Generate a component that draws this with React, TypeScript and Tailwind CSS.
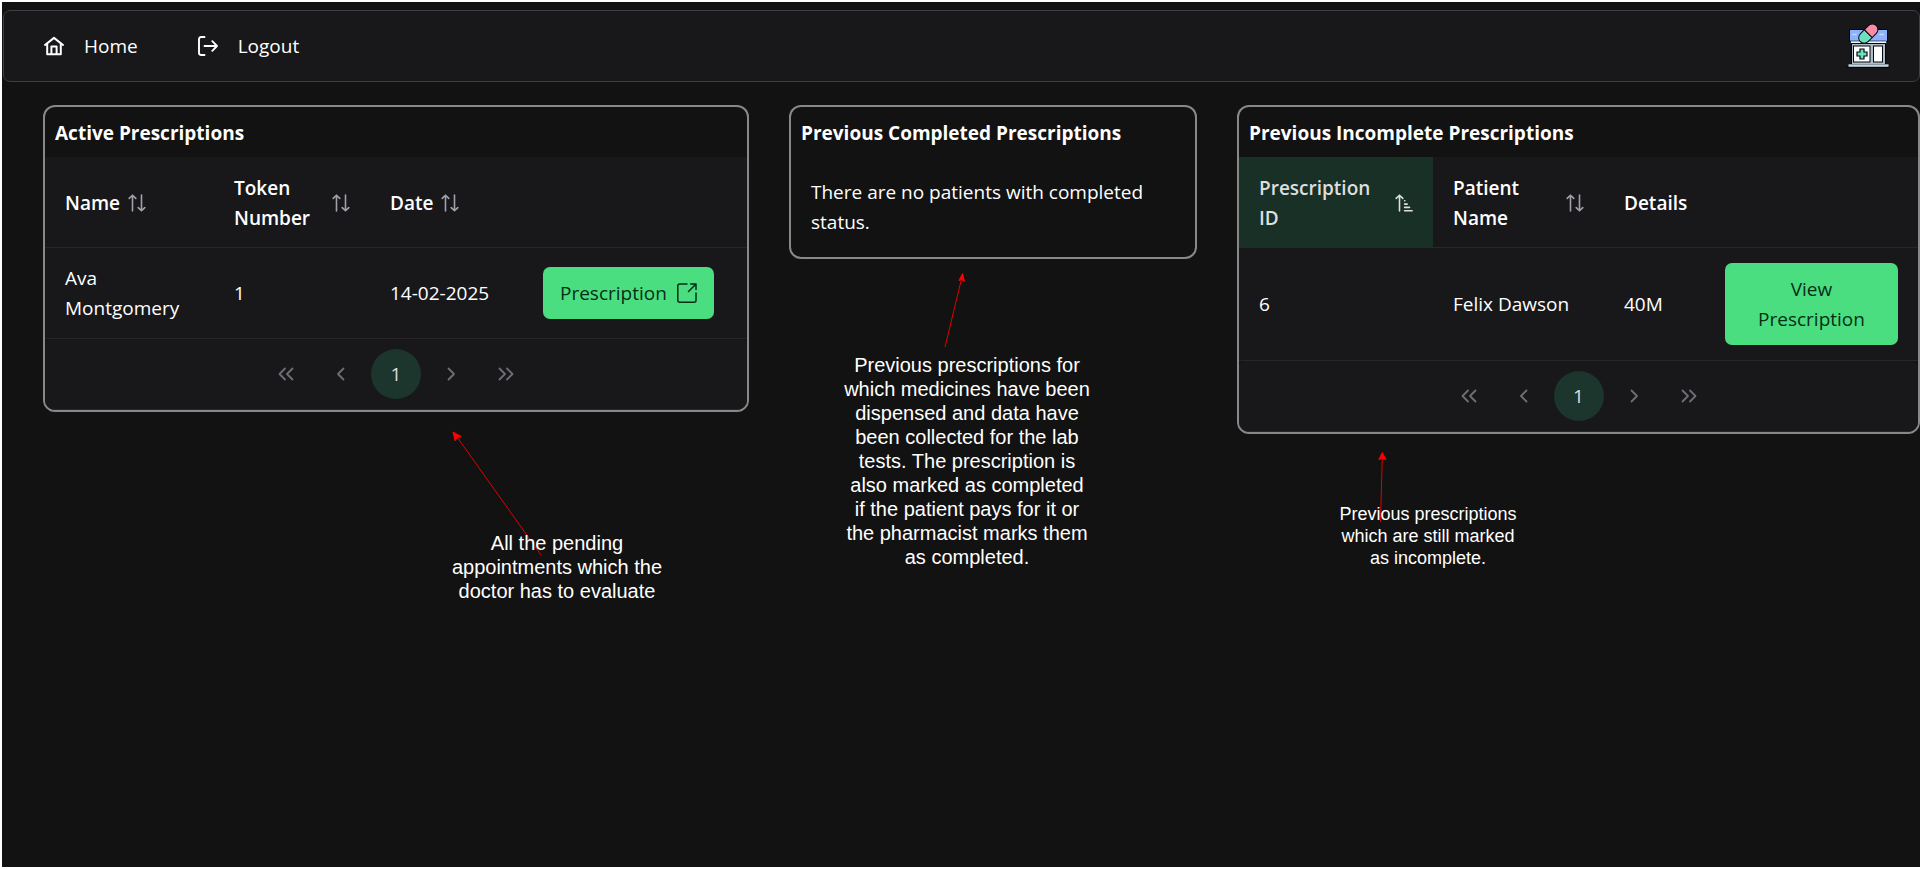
import type { ReactNode } from "react";

function HomeIcon() {
  return (
    <svg viewBox="0 0 20 20" className="size-5" fill="none" stroke="currentColor" strokeWidth="2" strokeLinecap="round" strokeLinejoin="round" aria-hidden="true">
      <path d="M1 9 10 1.9 19 9" />
      <path d="M3.2 7.8V18.2H16.8V7.8" />
      <path d="M7.4 18V10.6H12.6V18" />
    </svg>
  );
}

function LogoutIcon() {
  return (
    <svg viewBox="0 0 20 20" className="size-5" fill="none" stroke="currentColor" strokeWidth="1.9" strokeLinecap="round" strokeLinejoin="round" aria-hidden="true">
      <path d="M6.500 1H3.200Q1 1 1 3.200V16.800Q1 19 3.200 19H6.500" />
      <path d="M6.500 10H19M14.300 5.200 19 10l-4.700 4.800" />
    </svg>
  );
}

function SortIcon() {
  return (
    <svg viewBox="0 0 18 18" className="size-[18px] shrink-0 text-[#a1a1aa]" fill="none" stroke="currentColor" strokeWidth="1.6" strokeLinecap="round" strokeLinejoin="round" aria-hidden="true">
      <path d="M4.5 17V1.2M1.2 4.4 4.5 1.2l3.3 3.2" />
      <path d="M13.5 1V16.8M10.2 13.6l3.3 3.2 3.3-3.2" />
    </svg>
  );
}

function SortAmountIcon() {
  return (
    <svg viewBox="0 0 18 18" className="size-[18px] shrink-0" fill="none" stroke="currentColor" strokeWidth="1.6" strokeLinecap="round" strokeLinejoin="round" aria-hidden="true">
      <path d="M4.5 17V1.2M1.2 4.4 4.5 1.2l3.3 3.2" />
      <path d="M9.6 6.8h.3M9.6 10.1h2.6M9.6 13.4h4.9M9.6 16.7h7.6" />
    </svg>
  );
}

function ExternalIcon() {
  return (
    <svg viewBox="0 0 20 20" className="size-5" fill="none" stroke="currentColor" strokeWidth="1.5" strokeLinecap="round" strokeLinejoin="round" aria-hidden="true">
      <path d="M10 1H2.8Q.8 1 .8 3V17.2q0 2 2 2H17q2 0 2-2V10" />
      <path d="M11.5 8.5 19 1M13.6 1H19V6.4" />
    </svg>
  );
}

function PharmacyLogo() {
  return (
    <svg viewBox="0 0 44 44" className="size-11" role="img" aria-label="Pharmacy">
      <rect x="3.5" y="5.5" width="38" height="12" fill="#8db2fc" stroke="#05070c" />
      <path d="M6.500 10.500h4M33.500 10.500h4" stroke="#dbe7ff" strokeWidth="1.4" strokeDasharray="1.6 .8" />
      <rect x="4.5" y="17" width="36" height="2.5" fill="#f4f7fa" stroke="#05070c" strokeWidth=".6" />
      <rect x="5.5" y="19.5" width="34" height="21" fill="#aebcc8" stroke="#05070c" />
      <rect x="7.5" y="22" width="16.5" height="16" fill="#fff" stroke="#05070c" />
      <rect x="27.5" y="22" width="9" height="16" fill="#fff" stroke="#05070c" />
      <path d="M14 25h4v3h3v4h-3v3h-4v-3h-3v-4h3z" fill="#6be0bd" stroke="#05070c" strokeWidth="1.2" />
      <rect x="2.5" y="40.3" width="40" height="2.6" fill="#c4d6e2" />
      <path d="M0 43.4h44" stroke="#05070c" />
      <g transform="rotate(-45 22.300 9.600)">
        <path d="M22.300 4.100H16.500a5.500 5.500 0 0 0 0 11H22.300z" fill="#6be0bd" stroke="#05070c" />
        <path d="M22.300 4.100h5.800a5.500 5.500 0 0 1 0 11H22.300z" fill="#fb8ba5" stroke="#05070c" />
      </g>
    </svg>
  );
}

function PageArrow({ label, path }: { label: string; path: string }) {
  return (
    <button type="button" aria-label={label} className="flex size-[50px] items-center justify-center rounded-full text-[#6e6e74]">
      <svg viewBox="0 0 16 16" className="size-4" fill="none" stroke="currentColor" strokeWidth="1.8" strokeLinecap="round" strokeLinejoin="round" aria-hidden="true">
        <path d={path} />
      </svg>
    </button>
  );
}

function Paginator() {
  return (
    <nav aria-label="Pagination" className="flex justify-center gap-[5px] rounded-md border-b border-[#27272a] bg-[#18181b] py-[10px]">
      <PageArrow label="First page" path="M7 2.500 1.500 8 7 13.500M14.500 2.500 9 8l5.500 5.500" />
      <PageArrow label="Previous page" path="M10.500 2.500 5 8l5.500 5.500" />
      <button type="button" aria-current="page" className="size-[50px] rounded-full bg-[#1c352d] text-[#dedede]">
        1
      </button>
      <PageArrow label="Next page" path="M5.500 2.500 11 8l-5.500 5.500" />
      <PageArrow label="Last page" path="M1.500 2.500 7 8l-5.500 5.500M9 2.500 14.500 8 9 13.500" />
    </nav>
  );
}

function Card({ title, children, note }: { title: string; children: ReactNode; note: ReactNode }) {
  return (
    <div className="relative">
      <section className="overflow-hidden rounded-xl border-2 border-[#888888]">
        <h2 className="px-[10px] pt-[11px] pb-[9px] font-bold">{title}</h2>
        {children}
      </section>
      {note}
    </div>
  );
}

const th = "border-b border-[#27272a] px-5 pt-4 pb-[14px] text-left font-semibold";
const td = "border-b border-[#27272a] px-5 py-[15px]";
const tableStyle = "w-full table-fixed border-separate border-spacing-0 bg-[#18181b]";
const greenButton = "rounded-[7px] bg-[#4ade80] py-[11px] font-medium text-[#052e16]";

function ActiveTable() {
  return (
    <table className={tableStyle}>
      <colgroup>
        <col className="w-[169px]" />
        <col className="w-[156px]" />
        <col className="w-[153px]" />
        <col />
      </colgroup>
      <thead>
        <tr>
          <th className={th}>
            <div className="flex items-center gap-2">Name <SortIcon /></div>
          </th>
          <th className={th}>
            <div className="flex items-center justify-between gap-2">Token Number <SortIcon /></div>
          </th>
          <th className={th}>
            <div className="flex items-center gap-2">Date <SortIcon /></div>
          </th>
          <th className={th} aria-label="Actions" />
        </tr>
      </thead>
      <tbody>
        <tr>
          <td className={td}>Ava Montgomery</td>
          <td className={td}>1</td>
          <td className={td}>14-02-2025</td>
          <td className={td}>
            <button type="button" className={`${greenButton} flex items-center gap-[10px] px-[17px]`}>
              Prescription <ExternalIcon />
            </button>
          </td>
        </tr>
      </tbody>
    </table>
  );
}

function IncompleteTable() {
  return (
    <table className={tableStyle}>
      <colgroup>
        <col className="w-[194px]" />
        <col className="w-[171px]" />
        <col className="w-[101px]" />
        <col />
      </colgroup>
      <thead>
        <tr>
          <th className={`${th} bg-[#183026] text-[#dedede]`} aria-sort="ascending">
            <div className="flex items-center justify-between gap-2">Prescription ID <SortAmountIcon /></div>
          </th>
          <th className={th}>
            <div className="flex items-center justify-between gap-2">Patient Name <SortIcon /></div>
          </th>
          <th className={th}>Details</th>
          <th className={th} aria-label="Actions" />
        </tr>
      </thead>
      <tbody>
        <tr>
          <td className={td}>6</td>
          <td className={`${td} whitespace-nowrap`}>Felix Dawson</td>
          <td className={td}>40M</td>
          <td className={td}>
            <button type="button" className={`${greenButton} w-full px-5`}>View Prescription</button>
          </td>
        </tr>
      </tbody>
    </table>
  );
}

export default function App() {
  return (
    <div className="flex min-h-screen flex-col bg-white pt-[2px] pr-[3px] pb-[3px] pl-[2px] font-['Open_Sans',sans-serif] text-[19px] leading-[30px] text-white">
      <div className="grow bg-[#121212] pt-2">
        <header className="ml-px flex h-[72px] items-center justify-between rounded-[7px] border border-[#3f3f46] bg-[#18181b] pr-[29px] pl-10">
          <nav aria-label="Main" className="flex gap-15">
            <a href="#home" className="flex items-center gap-5"><HomeIcon />Home</a>
            <a href="#logout" className="flex items-center gap-5"><LogoutIcon />Logout</a>
          </nav>
          <PharmacyLogo />
        </header>

        <main className="mt-[23px] grid grid-cols-[706fr_408fr_683fr] items-start gap-10 pl-[41px]">
          <Card
            title="Active Prescriptions"
            note={
              <>
                <svg className="absolute top-[322px] left-[405px] h-[134px] w-[100px]" viewBox="0 0 100 134" aria-hidden="true">
                  <path d="M93 128 9 10" stroke="#e00000" fill="none" />
                  <path d="M5 5l8.300 4.500-4 .8-2.200 3.500z" fill="red" stroke="red" />
                </svg>
                <p className="absolute top-[426px] left-[404px] w-[220px] text-center font-['Liberation_Sans',Arial,sans-serif] text-[20px] leading-6">
                  All the pending appointments which the doctor has to evaluate
                </p>
              </>
            }
          >
            <ActiveTable />
            <Paginator />
          </Card>

          <Card
            title="Previous Completed Prescriptions"
            note={
              <>
                <svg className="absolute top-[163px] left-[150px] h-[84px] w-[34px]" viewBox="0 0 34 84" aria-hidden="true">
                  <path d="M6 79 22.500 11" stroke="#e00000" fill="none" />
                  <path d="M23.500 5.500 20 12.500l2.500-1 3 2z" fill="red" stroke="red" />
                </svg>
                <p className="absolute top-[248px] left-[54px] w-[248px] text-center font-['Liberation_Sans',Arial,sans-serif] text-[20px] leading-6">
                  Previous prescriptions for which medicines have been dispensed and data have been collected for the lab tests. The prescription is also marked as completed if the patient pays for it or the pharmacist marks them as completed.
                </p>
              </>
            }
          >
            <p className="p-5">There are no patients with completed status.</p>
          </Card>

          <Card
            title="Previous Incomplete Prescriptions"
            note={
              <>
                <svg className="absolute top-[342px] left-[135px] h-[80px] w-[20px]" viewBox="0 0 20 80" aria-hidden="true">
                  <path d="M8.500 75 10.300 10" stroke="#e00000" fill="none" />
                  <path d="M10.300 5.500 6.800 12.500l3.500-1 3.500 1z" fill="red" stroke="red" />
                </svg>
                <p className="absolute top-[398px] left-[101px] w-[180px] text-center font-['Liberation_Sans',Arial,sans-serif] text-[18px] leading-[22px]">
                  Previous prescriptions which are still marked as incomplete.
                </p>
              </>
            }
          >
            <IncompleteTable />
            <Paginator />
          </Card>
        </main>
      </div>
    </div>
  );
}
